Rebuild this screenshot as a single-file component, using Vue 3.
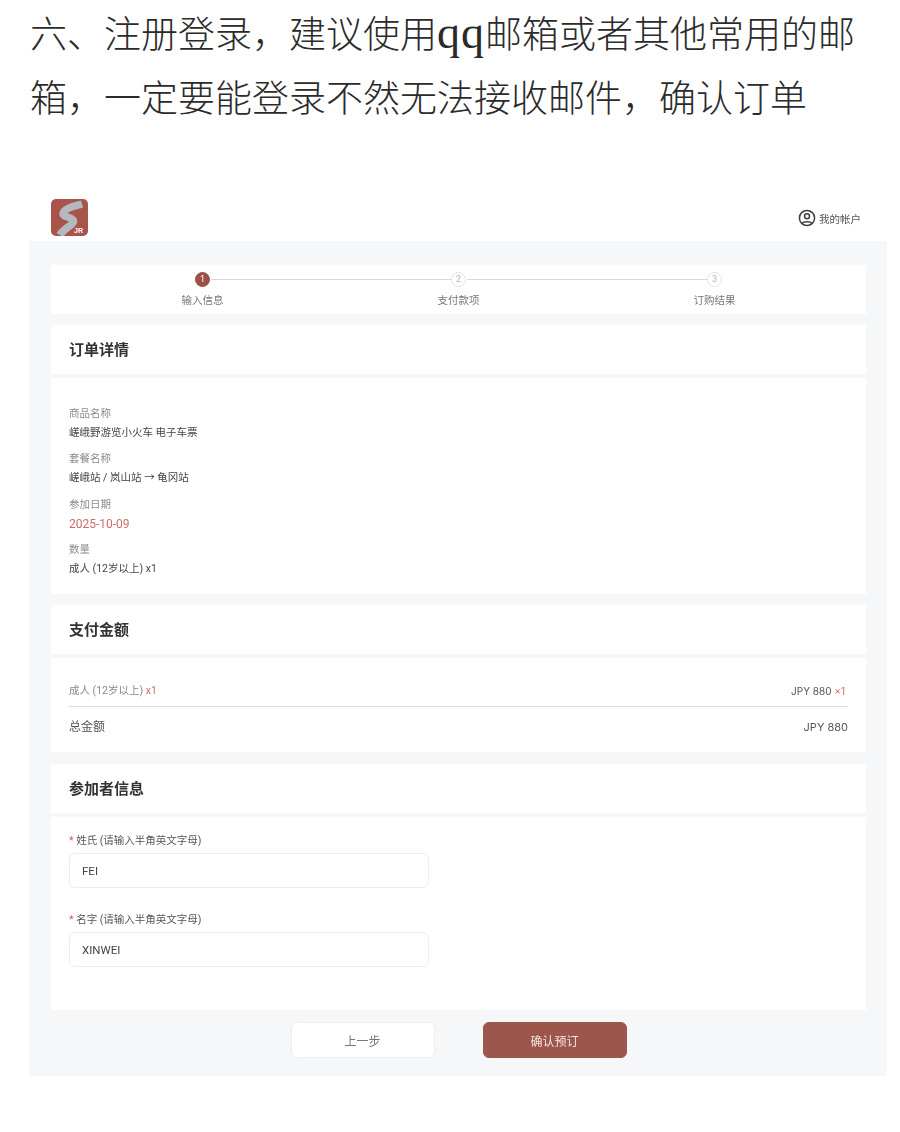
<script setup>
const steps = [
  { no: 1, label: "输入信息", active: true },
  { no: 2, label: "支付款项", active: false },
  { no: 3, label: "订购结果", active: false },
];

const details = [
  { label: "商品名称", value: "嵯峨野游览小火车 电子车票" },
  { label: "套餐名称", value: "嵯峨站 / 岚山站 → 龟冈站" },
  { label: "参加日期", value: "2025-10-09", date: true },
  { label: "数量", value: "成人 (12岁以上) x1" },
];

const fields = [
  { label: "姓氏 (请输入半角英文字母)", value: "FEI" },
  { label: "名字 (请输入半角英文字母)", value: "XINWEI" },
];
</script>

<template>
  <div class="page">
    <div class="intro">
      六、注册登录，建议使用<span class="latin">qq</span>邮箱或者其他常用的邮<br>箱，一定要能登录不然无法接收邮件，确认订单
    </div>

    <div class="shot">
      <header class="top">
        <svg class="logo" width="37" height="37" viewBox="0 0 37 37">
          <rect width="37" height="37" rx="5" fill="#a8544b" />
          <path d="M31 5 C24 7 13 9 12 14.500 C11.500 18.500 23 18 22.500 22.500 C22 26.500 13 29 9 36" fill="none" stroke="#b3b9bf" stroke-width="7.500" />
          <text x="23" y="33.500" class="logo-text">JR</text>
        </svg>
        <div class="account">
          <svg width="18" height="18" viewBox="0 0 18 18" fill="none" stroke="#3f3f3f" stroke-width="1.500">
            <circle cx="9" cy="9" r="7.600" />
            <circle cx="9" cy="7.300" r="2.500" />
            <path d="M4.300 14.600 C5.200 12.200 12.800 12.200 13.700 14.600" />
          </svg>
          <span>我的帐户</span>
        </div>
      </header>

      <main class="content">
        <section class="card steps">
          <div class="steps-row">
            <div v-for="step in steps" :key="step.no" class="step" :class="{ active: step.active }">
              <span class="dot">{{ step.no }}</span>
              <span class="step-label">{{ step.label }}</span>
            </div>
          </div>
        </section>

        <section class="block">
          <h2 class="card heading">订单详情</h2>
          <div class="card detail-body">
            <div v-for="row in details" :key="row.label" class="detail">
              <div class="detail-label">{{ row.label }}</div>
              <div class="detail-value" :class="{ date: row.date }">{{ row.value }}</div>
            </div>
          </div>
        </section>

        <section class="block">
          <h2 class="card heading">支付金额</h2>
          <div class="card pay-body">
            <div class="pay-line">
              <span>成人 (12岁以上) <em>x1</em></span>
              <span class="price">JPY 880 <em>x1</em></span>
            </div>
            <div class="pay-total">
              <span>总金额</span>
              <span class="total-price">JPY 880</span>
            </div>
          </div>
        </section>

        <section class="block people">
          <h2 class="card heading">参加者信息</h2>
          <div class="card form-body">
            <div v-for="field in fields" :key="field.label" class="field">
              <label><i>*</i> {{ field.label }}</label>
              <input type="text" :value="field.value">
            </div>
          </div>
        </section>

        <div class="actions">
          <button class="btn">上一步</button>
          <button class="btn primary">确认预订</button>
        </div>
      </main>
    </div>
  </div>
</template>

<style>
html, body {
  background: #fff;
}
</style>

<style scoped>
.page {
  height: 1132px;
  overflow: hidden;
  background: #fff;
  font-family: "Roboto", "Noto Sans CJK SC", sans-serif;
}

.intro {
  padding: 4px 0 0 30px;
  font-family: "Liberation Serif", "Noto Sans CJK SC", serif;
  font-size: 37px;
  font-weight: 300;
  line-height: 64px;
  color: #2b2b2b;
  white-space: nowrap;
}

.latin {
  font-size: 46px;
  letter-spacing: 1px;
  line-height: 0;
}

.shot {
  width: 858px;
  margin: 58px 0 0 29px;
  filter: blur(0.35px);
}

.top {
  height: 51px;
  padding: 9px 26px 0 22px;
  box-sizing: border-box;
  display: flex;
  justify-content: space-between;
  align-items: flex-start;
}

.logo-text {
  font-family: "Liberation Sans", sans-serif;
  font-size: 7px;
  font-weight: 700;
  fill: #fff;
}

.account {
  margin-top: 10px;
  display: flex;
  align-items: center;
  gap: 3px;
  font-size: 10.500px;
  color: #555;
}

.content {
  height: 835px;
  box-sizing: border-box;
  padding: 24px 21px 0 22px;
  background: #f5f7f9;
}

.card {
  background: #fff;
}

.steps {
  height: 49px;
  display: flex;
  justify-content: center;
}

.steps-row {
  display: grid;
  grid-template-columns: repeat(3, 256px);
}

.step {
  position: relative;
  display: flex;
  flex-direction: column;
  align-items: center;
  padding-top: 7px;
}

.step:not(:last-child)::after {
  content: "";
  position: absolute;
  top: 14px;
  left: calc(50% + 8px);
  width: 240px;
  height: 1px;
  background: #d8d8d8;
}

.dot {
  width: 13px;
  height: 13px;
  border: 1px solid #e4e4e4;
  border-radius: 50%;
  font-size: 9px;
  line-height: 13px;
  text-align: center;
  color: #b5b5b5;
}

.step.active .dot {
  background: #9d5046;
  border-color: #9d5046;
  color: #fff;
}

.step-label {
  margin-top: 7px;
  font-size: 10.500px;
  line-height: 14px;
  color: #777;
}

.block {
  margin-top: 11px;
}

.block.people {
  margin-top: 12px;
}

.heading {
  height: 49px;
  margin: 0 0 4px;
  padding-left: 18px;
  font-size: 15px;
  font-weight: 700;
  line-height: 51px;
  color: #333;
}

.detail-body {
  height: 216px;
  box-sizing: border-box;
  padding: 28px 18px 0;
}

.detail {
  height: 45.300px;
}

.detail-label {
  font-size: 10.500px;
  line-height: 16px;
  color: #8b8b8b;
}

.detail-value {
  margin-top: 3px;
  font-size: 10.500px;
  line-height: 16px;
  color: #444;
}

.detail-value.date {
  font-size: 12px;
  color: #cf6b6b;
}

.pay-body {
  height: 94px;
  box-sizing: border-box;
  padding: 25px 18px 0;
}

.pay-line {
  height: 23px;
  display: flex;
  justify-content: space-between;
  font-size: 10.500px;
  line-height: 16px;
  color: #8a8a8a;
  border-bottom: 1px solid #dcdcdc;
}

.pay-line em {
  font-style: normal;
  color: #cf6b6b;
}

.price {
  font-family: "Inter", sans-serif;
  font-size: 10px;
  color: #555;
  padding-right: 3px;
}

.pay-total {
  margin-top: 11px;
  display: flex;
  justify-content: space-between;
  font-size: 12px;
  line-height: 18px;
  color: #555;
}

.total-price {
  font-family: "Inter", sans-serif;
  font-size: 11px;
}

.form-body {
  height: 193px;
  box-sizing: border-box;
  padding: 16px 18px 0;
}

.field {
  height: 79px;
}

.field label {
  display: block;
  font-size: 10.500px;
  line-height: 16px;
  color: #555;
}

.field i {
  font-style: normal;
  color: #cf5a5a;
}

.field input {
  display: block;
  width: 360px;
  height: 35px;
  box-sizing: border-box;
  margin-top: 4px;
  padding: 0 12px;
  border: 1px solid #eeeeee;
  border-radius: 6px;
  background: #fff;
  font-family: "Roboto", sans-serif;
  font-size: 11.500px;
  color: #444;
  outline: none;
}

.actions {
  margin-top: 12px;
  display: flex;
  justify-content: center;
  gap: 48px;
}

.btn {
  width: 144px;
  height: 36px;
  border: 1px solid #eceef0;
  border-radius: 6px;
  background: #fff;
  font-family: "Noto Sans CJK SC", sans-serif;
  font-size: 12px;
  color: #777;
}

.btn.primary {
  background: #9d564b;
  border-color: #9d564b;
  color: #f6e6e2;
}
</style>
